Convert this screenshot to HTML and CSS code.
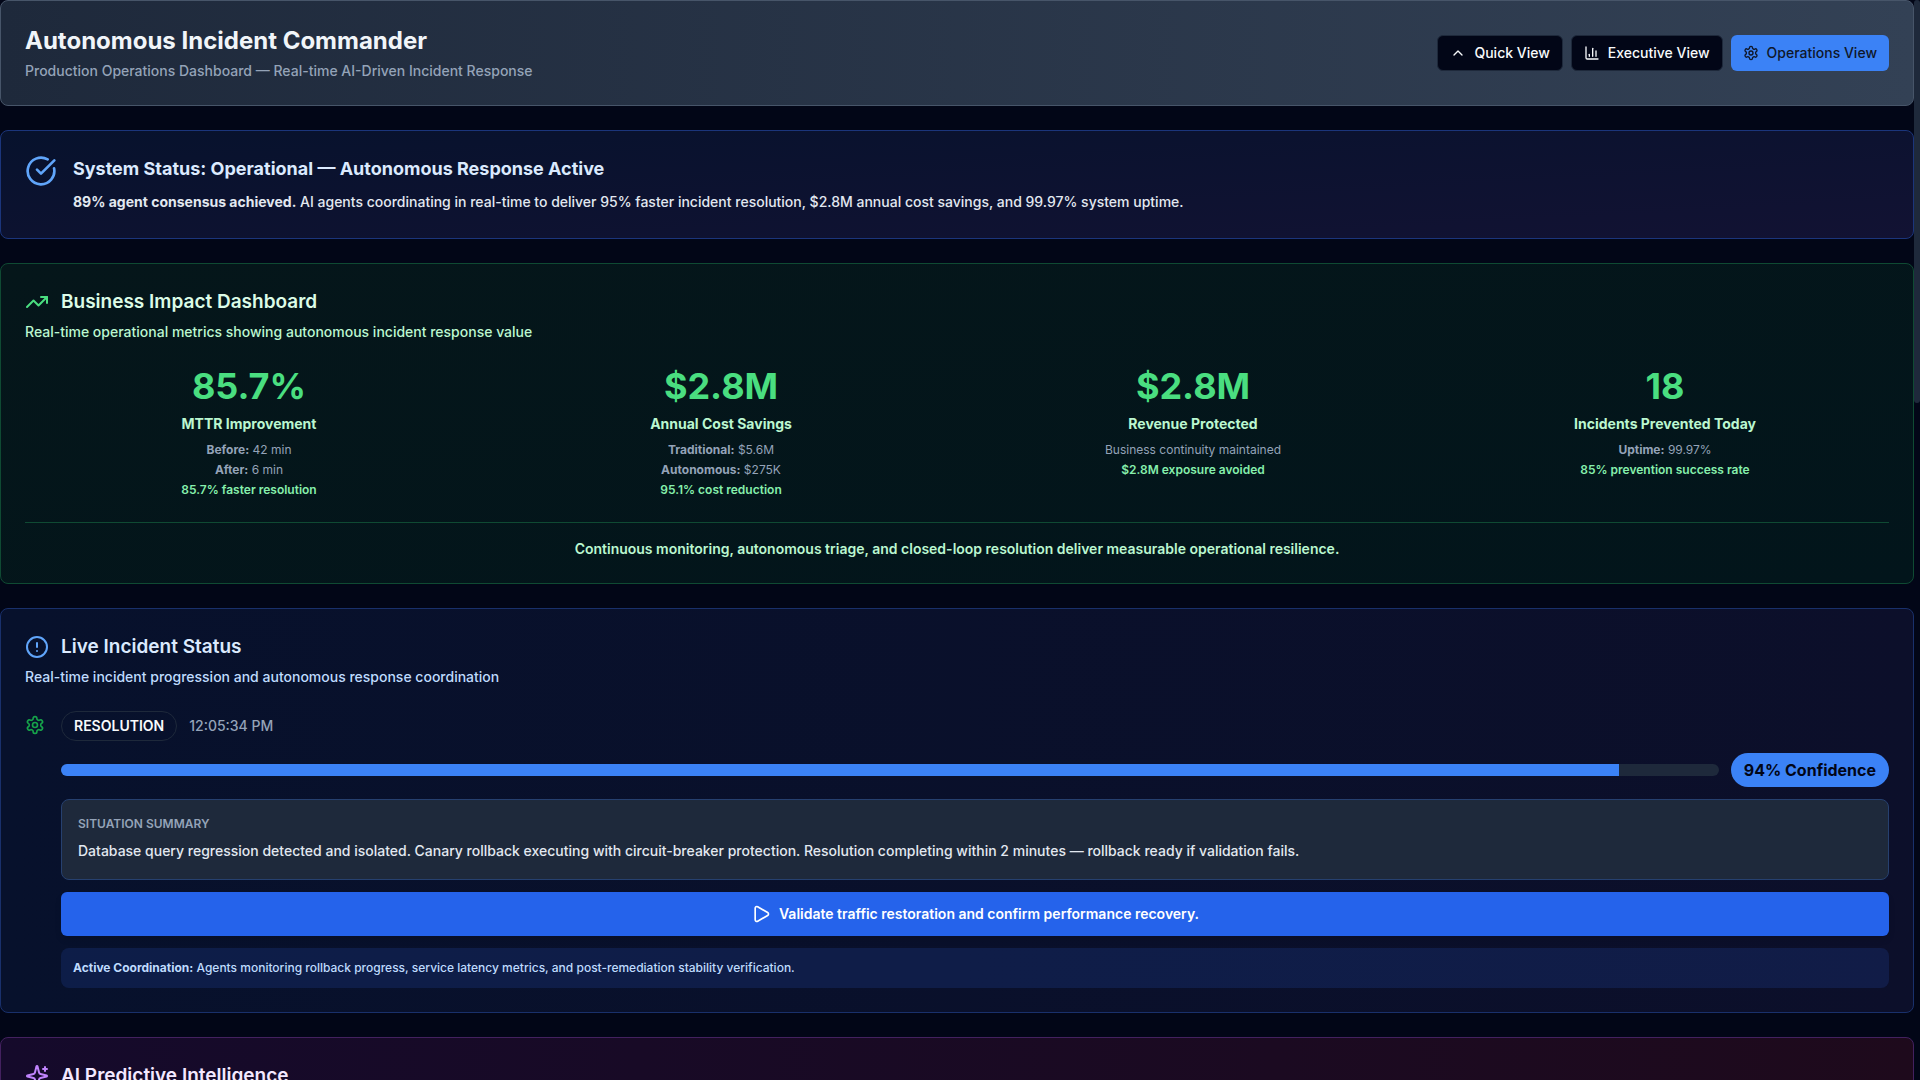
FILE: index.html
```html
<!DOCTYPE html>
<html lang="en">
<head>
<meta charset="utf-8">
<meta name="viewport" content="width=device-width, initial-scale=1">
<title>Autonomous Incident Commander</title>
<link rel="stylesheet" href="styles.css">
</head>
<body>
<svg class="sprite" aria-hidden="true">
  <symbol id="gear" viewBox="0 0 24 24"><path d="M12.22 2h-.44a2 2 0 0 0-2 2v.18a2 2 0 0 1-1 1.73l-.43.25a2 2 0 0 1-2 0l-.15-.08a2 2 0 0 0-2.73.73l-.22.38a2 2 0 0 0 .73 2.73l.15.1a2 2 0 0 1 1 1.72v.51a2 2 0 0 1-1 1.74l-.15.09a2 2 0 0 0-.73 2.73l.22.38a2 2 0 0 0 2.73.73l.15-.08a2 2 0 0 1 2 0l.43.25a2 2 0 0 1 1 1.73V20a2 2 0 0 0 2 2h.44a2 2 0 0 0 2-2v-.18a2 2 0 0 1 1-1.73l.43-.25a2 2 0 0 1 2 0l.15.08a2 2 0 0 0 2.73-.73l.22-.39a2 2 0 0 0-.73-2.73l-.15-.08a2 2 0 0 1-1-1.74v-.5a2 2 0 0 1 1-1.74l.15-.09a2 2 0 0 0 .73-2.73l-.22-.38a2 2 0 0 0-2.73-.73l-.15.08a2 2 0 0 1-2 0l-.43-.25a2 2 0 0 1-1-1.73V4a2 2 0 0 0-2-2z"/><circle cx="12" cy="12" r="3"/></symbol>
</svg>
<main class="page">
  <header class="card masthead">
    <div class="masthead-text">
      <h1 class="masthead-title">Autonomous Incident Commander</h1>
      <p class="masthead-subtitle">Production Operations Dashboard — Real-time AI-Driven Incident Response</p>
    </div>
    <nav class="views" aria-label="Views">
      <button class="view-button" type="button"><svg class="icon icon-sm" viewBox="0 0 24 24"><path d="m18 15-6-6-6 6"/></svg>Quick View</button>
      <button class="view-button" type="button"><svg class="icon icon-sm" viewBox="0 0 24 24"><path d="M3 3v16a2 2 0 0 0 2 2h16"/><path d="M18 17V9"/><path d="M13 17V5"/><path d="M8 17v-3"/></svg>Executive View</button>
      <button class="view-button view-button-active" type="button"><svg class="icon icon-sm"><use href="#gear"/></svg>Operations View</button>
    </nav>
  </header>

  <section class="card status">
    <svg class="icon icon-xl tint-blue" viewBox="0 0 24 24"><path d="M21.801 10A10 10 0 1 1 17 3.335"/><path d="m9 11 3 3L22 4"/></svg>
    <div class="status-text">
      <h2 class="status-title">System Status: Operational — Autonomous Response Active</h2>
      <p class="body-text"><strong>89% agent consensus achieved.</strong> AI agents coordinating in real-time to deliver 95% faster incident resolution, $2.8M annual cost savings, and 99.97% system uptime.</p>
    </div>
  </section>

  <section class="card impact">
    <div class="card-header">
      <h2 class="card-title"><svg class="icon icon-lg tint-green" viewBox="0 0 24 24"><path d="M22 7 13.5 15.5 8.5 10.5 2 17"/><path d="M16 7h6v6"/></svg>Business Impact Dashboard</h2>
      <p class="card-description">Real-time operational metrics showing autonomous incident response value</p>
    </div>
    <div class="metrics">
      <div class="metric">
        <div class="metric-value">85.7%</div>
        <div class="metric-label">MTTR Improvement</div>
        <div class="metric-details">
          <p><strong>Before:</strong> 42 min</p>
          <p><strong>After:</strong> 6 min</p>
          <p class="metric-result">85.7% faster resolution</p>
        </div>
      </div>
      <div class="metric">
        <div class="metric-value">$2.8M</div>
        <div class="metric-label">Annual Cost Savings</div>
        <div class="metric-details">
          <p><strong>Traditional:</strong> $5.6M</p>
          <p><strong>Autonomous:</strong> $275K</p>
          <p class="metric-result">95.1% cost reduction</p>
        </div>
      </div>
      <div class="metric">
        <div class="metric-value">$2.8M</div>
        <div class="metric-label">Revenue Protected</div>
        <div class="metric-details">
          <p>Business continuity maintained</p>
          <p class="metric-result">$2.8M exposure avoided</p>
        </div>
      </div>
      <div class="metric">
        <div class="metric-value">18</div>
        <div class="metric-label">Incidents Prevented Today</div>
        <div class="metric-details">
          <p><strong>Uptime:</strong> 99.97%</p>
          <p class="metric-result">85% prevention success rate</p>
        </div>
      </div>
    </div>
    <p class="impact-note">Continuous monitoring, autonomous triage, and closed-loop resolution deliver measurable operational resilience.</p>
  </section>

  <section class="card live">
    <div class="card-header">
      <h2 class="card-title"><svg class="icon icon-lg tint-blue" viewBox="0 0 24 24"><circle cx="12" cy="12" r="10"/><path d="M12 8v4"/><path d="M12 16h.01"/></svg>Live Incident Status</h2>
      <p class="card-description">Real-time incident progression and autonomous response coordination</p>
    </div>
    <div class="incident">
      <svg class="icon icon-md incident-icon"><use href="#gear"/></svg>
      <div class="incident-body">
        <div class="incident-row">
          <span class="phase">RESOLUTION</span>
          <time class="timestamp">12:05:34 PM</time>
        </div>
        <div class="incident-row">
          <div class="progress" role="progressbar" aria-label="Confidence" aria-valuenow="94" aria-valuemin="0" aria-valuemax="100"><div class="progress-fill" style="width: 94%"></div></div>
          <span class="confidence">94% Confidence</span>
        </div>
        <div class="summary">
          <h3 class="summary-title">SITUATION SUMMARY</h3>
          <p class="body-text">Database query regression detected and isolated. Canary rollback executing with circuit-breaker protection. Resolution completing within 2 minutes — rollback ready if validation fails.</p>
        </div>
        <button class="action" type="button"><svg class="icon icon-md" viewBox="0 0 24 24"><path d="M5 5a2 2 0 0 1 3.008-1.728l11.997 6.998a2 2 0 0 1 .003 3.458l-12 7A2 2 0 0 1 5 19z"/></svg>Validate traffic restoration and confirm performance recovery.</button>
        <p class="coordination"><strong>Active Coordination:</strong> Agents monitoring rollback progress, service latency metrics, and post-remediation stability verification.</p>
      </div>
    </div>
  </section>

  <section class="card predictive">
    <div class="card-header">
      <h2 class="card-title"><svg class="icon icon-lg tint-purple" viewBox="0 0 24 24"><path d="M9.937 15.5A2 2 0 0 0 8.5 14.063l-6.135-1.582a.5.5 0 0 1 0-.962L8.5 9.936A2 2 0 0 0 9.937 8.5l1.582-6.135a.5.5 0 0 1 .963 0L14.063 8.5A2 2 0 0 0 15.5 9.937l6.135 1.581a.5.5 0 0 1 0 .964L15.5 14.063a2 2 0 0 0-1.437 1.437l-1.582 6.135a.5.5 0 0 1-.963 0z"/><path d="M20 3v4"/><path d="M22 5h-4"/></svg>AI Predictive Intelligence</h2>
    </div>
  </section>
</main>
<div class="scroll-thumb" aria-hidden="true"></div>
</body>
</html>
```
FILE: styles.css
```css
* {
  box-sizing: border-box;
  margin: 0;
}

body {
  height: 100vh;
  overflow: hidden;
  background: #020617;
  color: #f8fafc;
  font-family: Inter, "Liberation Sans", sans-serif;
  font-size: 14px;
  line-height: 20px;
}

strong {
  font-weight: 700;
}

.sprite {
  display: none;
}

.page {
  display: flex;
  flex-direction: column;
  gap: 24px;
  padding-right: 6px;
}

.scroll-thumb {
  position: fixed;
  top: 0;
  right: 0;
  width: 6px;
  height: 37.3vh;
  border-radius: 3px;
  background: #1e293b;
}

.card {
  padding: 24px;
  border: 1px solid;
  border-radius: 8px;
}

.icon {
  flex: none;
  fill: none;
  stroke: currentColor;
  stroke-width: 2;
  stroke-linecap: round;
  stroke-linejoin: round;
}

.icon-sm {
  width: 16px;
  height: 16px;
}

.icon-md {
  width: 20px;
  height: 20px;
}

.icon-lg {
  width: 24px;
  height: 24px;
}

.icon-xl {
  width: 32px;
  height: 32px;
}

.tint-blue {
  color: #60a5fa;
}

.tint-green {
  color: #4ade80;
}

.tint-purple {
  color: #c084fc;
}

.body-text {
  padding-bottom: 1px;
  color: #e2e8f0;
  font-weight: 500;
  line-height: 22px;
}

/* Masthead */

.masthead {
  display: flex;
  align-items: center;
  justify-content: space-between;
  border-color: #475569;
  background: linear-gradient(to right, #1e293b, #334155);
}

.masthead-title {
  margin-bottom: 4px;
  color: #f1f5f9;
  font-size: 24px;
  font-weight: 700;
  line-height: 32px;
}

.masthead-subtitle {
  color: #94a3b8;
  font-weight: 500;
}

.views {
  display: flex;
  gap: 8px;
}

.view-button {
  display: flex;
  align-items: center;
  gap: 8px;
  height: 36px;
  padding: 0 12px;
  border: 1px solid #1e293b;
  border-radius: 6px;
  background: #020617;
  color: #f8fafc;
  font: 500 14px/20px Inter, "Liberation Sans", sans-serif;
  cursor: pointer;
}

.view-button-active {
  border: 0;
  background: #3b82f6;
  color: #0f172a;
}

/* System status */

.status {
  display: flex;
  gap: 16px;
  border-color: #1b357b;
  background: linear-gradient(to bottom right, #07122d, #121233);
}

.status-title {
  margin-bottom: 8px;
  color: #dbeafe;
  font-size: 18px;
  font-weight: 700;
  line-height: 28px;
}

/* Shared section header */

.card-header {
  margin-bottom: 24px;
}

.card-title {
  display: flex;
  align-items: center;
  gap: 12px;
  margin-bottom: 6px;
  font-size: 19px;
  font-weight: 600;
  line-height: 28px;
}

.card-description {
  font-weight: 500;
}

/* Business impact */

.impact {
  border-color: #0f4a33;
  background: linear-gradient(to bottom right, #05161a, #02151b);
}

.impact .card-title {
  color: #dcfce7;
}

.impact .card-description {
  color: #bbf7d0;
}

.metrics {
  display: grid;
  grid-template-columns: repeat(4, 1fr);
  gap: 24px;
  text-align: center;
}

.metric-value {
  margin-bottom: 8px;
  color: #4ade80;
  font-size: 36px;
  font-weight: 700;
  line-height: 40px;
}

.metric-label {
  margin-bottom: 8px;
  color: #bbf7d0;
  font-weight: 700;
}

.metric-details {
  display: flex;
  flex-direction: column;
  gap: 4px;
  color: #94a3b8;
  font-size: 12px;
  line-height: 16px;
}

.metric-result {
  color: #86efac;
  font-weight: 600;
}

.impact-note {
  margin-top: 24px;
  padding-top: 16px;
  border-top: 1px solid #0f4a33;
  color: #bbf7d0;
  font-weight: 600;
  text-align: center;
}

/* Live incident */

.live {
  border-color: #19306b;
  background: linear-gradient(to right, #07112c, #0c0f2a);
}

.live .card-title {
  color: #dbeafe;
}

.live .card-description {
  color: #bfdbfe;
}

.incident {
  display: flex;
  gap: 16px;
}

.incident-icon {
  margin-top: 4px;
  color: #16a34a;
}

.incident-body {
  display: flex;
  flex: 1;
  flex-direction: column;
  gap: 12px;
}

.incident-row {
  display: flex;
  align-items: center;
  gap: 12px;
}

.phase {
  padding: 4px 12px;
  border: 1px solid #1e293b;
  border-radius: 15px;
  font-weight: 600;
}

.timestamp {
  color: #94a3b8;
  font-weight: 500;
}

.progress {
  flex: 1;
  height: 12px;
  overflow: hidden;
  border-radius: 6px;
  background: #1e293b;
}

.progress-fill {
  height: 100%;
  background: #3b82f6;
}

.confidence {
  padding: 5px 13px;
  border-radius: 17px;
  background: #3b82f6;
  color: #020617;
  font-size: 16px;
  font-weight: 700;
  line-height: 24px;
}

.summary {
  padding: 16px;
  border: 1px solid #26406f;
  border-radius: 8px;
  background: #1e293b;
}

.summary-title {
  margin-bottom: 8px;
  color: #94a3b8;
  font-size: 12px;
  font-weight: 600;
  line-height: 16px;
}

.action {
  display: flex;
  align-items: center;
  justify-content: center;
  gap: 8px;
  height: 44px;
  border: 0;
  border-radius: 6px;
  background: #2563eb;
  box-shadow: 0 4px 6px rgba(0, 0, 0, 0.1);
  color: #fff;
  font: 600 14px/20px Inter, "Liberation Sans", sans-serif;
  cursor: pointer;
}

.coordination {
  padding: 12px;
  border-radius: 8px;
  background: rgba(30, 58, 138, 0.3);
  color: #bfdbfe;
  font-size: 12px;
  font-weight: 500;
  line-height: 16px;
}

/* Predictive intelligence */

.predictive {
  border-color: #43215f;
  background: linear-gradient(to right, #150a2b, #1e0a1c);
}

.predictive .card-title {
  color: #f3e8ff;
}
```
